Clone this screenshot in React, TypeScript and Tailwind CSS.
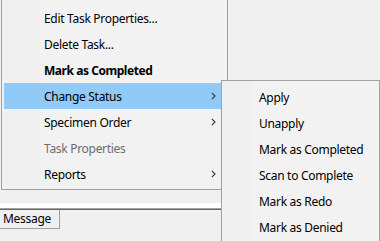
import React from "react";

type Item = {
  label: string;
  bold?: boolean;
  disabled?: boolean;
  submenu?: boolean;
  active?: boolean;
};

const mainItems: Item[] = [
  { label: "Edit Task Properties..." },
  { label: "Delete Task..." },
  { label: "Mark as Completed", bold: true },
  { label: "Change Status", submenu: true, active: true },
  { label: "Specimen Order", submenu: true },
  { label: "Task Properties", disabled: true },
  { label: "Reports", submenu: true },
];

const statusItems: Item[] = [
  { label: "Apply" },
  { label: "Unapply" },
  { label: "Mark as Completed" },
  { label: "Scan to Complete" },
  { label: "Mark as Redo" },
  { label: "Mark as Denied" },
];

function Chevron() {
  return (
    <svg width="5" height="8" viewBox="0 0 5 8" className="shrink-0">
      <path d="M0.8 0.8 L4 4 L0.8 7.2" fill="none" stroke="#3c3c3c" strokeWidth="1.2" />
    </svg>
  );
}

function MenuRow({ item, indent }: { item: Item; indent: string }) {
  return (
    <div
      className={`mx-[2px] flex h-[26px] items-center justify-between pr-[9px] ${indent} ${
        item.active ? "bg-[#91c9f7]" : ""
      }`}
    >
      <span
        className={`whitespace-nowrap pt-px ${item.bold ? "font-bold tracking-[-0.45px]" : "tracking-[-0.3px]"} ${
          item.disabled ? "text-[#6d6d6d]" : "text-black"
        }`}
      >
        {item.label}
      </span>
      {item.submenu && <Chevron />}
    </div>
  );
}

export default function App() {
  return (
    <div className="relative h-[241px] w-[380px] overflow-hidden bg-[#f0f0f0] font-['Noto_Sans',sans-serif] text-[12px] leading-none">
      {/* window behind the menus */}
      <div className="flex flex-col">
        <div className="h-[203px]" />
        <div className="h-[5px] bg-white" />
        <div className="h-px bg-[#a0a0a0]" />
        <div className="h-px bg-[#696969]" />
        <div className="flex">
          <div className="flex h-[19px] w-[60px] items-center border-r border-b border-[#a0a0a0] pl-[3px] tracking-[-0.3px] text-black">
            Message
          </div>
        </div>
      </div>

      {/* context menu */}
      <div className="absolute left-[1px] top-0 w-[227px] border-x border-b border-[#a0a0a0] bg-[linear-gradient(to_right,#f0f0f0_38px,#f2f2f2_38px)] pt-[5px] pb-[2px]">
        {mainItems.map((item) => (
          <MenuRow key={item.label} item={item} indent="pl-[40px]" />
        ))}
      </div>

      {/* Change Status submenu */}
      <div className="absolute left-[221px] top-[80px] w-[159px] border border-[#a0a0a0] bg-[linear-gradient(to_right,#f0f0f0_31px,#f2f2f2_31px)] pt-[3px] pb-[3px]">
        {statusItems.map((item) => (
          <MenuRow key={item.label} item={item} indent="pl-[35px]" />
        ))}
      </div>
    </div>
  );
}
